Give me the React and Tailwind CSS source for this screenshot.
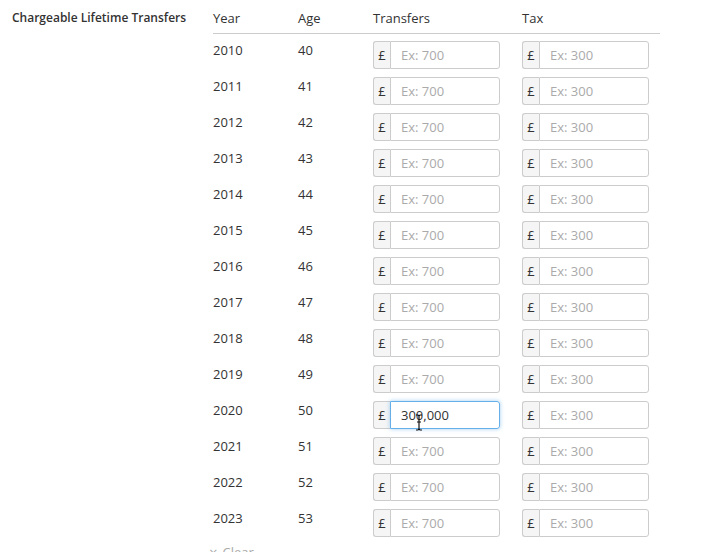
import React from 'react';

const rows = [
  [2010, 40], [2011, 41], [2012, 42], [2013, 43], [2014, 44], [2015, 45], [2016, 46],
  [2017, 47], [2018, 48], [2019, 49], [2020, 50], [2021, 51], [2022, 52], [2023, 53],
];

function MoneyInput({ placeholder, value, focused }) {
  return (
    <div className="relative flex h-[28px] w-[127px]">
      <span className="flex w-[17px] items-center justify-center rounded-l-[3px] border border-r-0 border-[#ccc] bg-[#f5f5f5] text-[13px] text-[#333]">
        £
      </span>
      <input
        readOnly
        defaultValue={value}
        placeholder={placeholder}
        className={`min-w-0 flex-1 rounded-r-[3px] border px-[10px] text-[13px] text-[#333] outline-none placeholder:text-[#aaa] ${
          focused ? 'border-[#66afe9] shadow-[0_0_4px_rgba(102,175,233,0.6)]' : 'border-[#ccc]'
        }`}
      />
      {focused && (
        <svg className="pointer-events-none absolute left-[42px] top-[13px]" width="8" height="17" viewBox="0 0 8 17">
          <path d="M1 1h2l1 1 1-1h2M4 2v13M1 16h2l1-1 1 1h2M2 8h4" stroke="#111" strokeWidth="1.2" fill="none" />
        </svg>
      )}
    </div>
  );
}

export default function App() {
  return (
    <div className="flex bg-white text-[13px] text-[#333]" style={{ fontFamily: '"Open Sans", "Liberation Sans", sans-serif' }}>
      <div className="w-[213px] pl-[12px] pt-[9px] text-[12px] font-semibold leading-[18px]">Chargeable Lifetime Transfers</div>

      <div className="w-[447px]">
        {/* Header */}
        <div className="grid grid-cols-[85px_75px_149px_1fr] border-b border-[#ccc] pt-[9px] pb-[6px] leading-[18px]">
          <div>Year</div>
          <div>Age</div>
          <div>Transfers</div>
          <div>Tax</div>
        </div>

        <div className="pt-[7px]">
          {rows.map(([year, age]) => (
            <div key={year} className="mb-[8px] grid grid-cols-[85px_75px_149px_1fr] leading-[18px]">
              <div>{year}</div>
              <div>{age}</div>
              <MoneyInput
                placeholder="Ex: 700"
                value={year === 2020 ? '300,000' : undefined}
                focused={year === 2020}
              />
              <MoneyInput placeholder="Ex: 300" />
            </div>
          ))}
        </div>

        <div className="-ml-[4px] -mt-[2px] flex items-center gap-[5px] text-[13px] leading-[18px] text-[#aaa]">
          <span className="text-[15px]">×</span>
          <span>Clear</span>
        </div>
      </div>
    </div>
  );
}
